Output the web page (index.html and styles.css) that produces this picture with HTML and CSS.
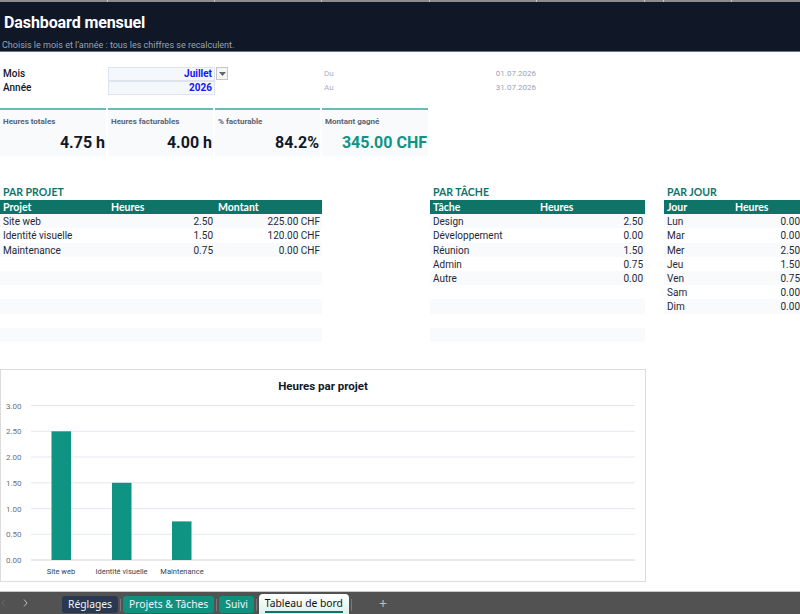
FILE: index.html
```html
<!DOCTYPE html>
<html lang="fr">
<head>
  <meta charset="UTF-8">
  <meta name="viewport" content="width=device-width, initial-scale=1.0">
  <title>Dashboard mensuel</title>
  <link rel="stylesheet" href="styles.css">
</head>
<body>
  <!-- column edges along the top of the sheet -->
  <div class="colbar">
    <span class="w-a"></span><span class="w-b"></span><span class="w-c"></span><span class="w-d"></span>
    <span class="w-e"></span><span class="w-f"></span><span class="w-g"></span><span class="w-h"></span><span></span>
  </div>

  <header class="banner">
    <h1>Dashboard mensuel</h1>
    <p>Choisis le mois et l’année : tous les chiffres se recalculent.</p>
  </header>

  <main class="sheet">
    <!-- Month / year selection -->
    <div class="params">
      <div class="lbl">Mois</div>
      <div class="input">Juillet<span class="dd"><svg width="7" height="4" viewBox="0 0 7 4"><path d="M0 0h7L3.5 4z" fill="#666"/></svg></span></div>
      <div></div>
      <div class="muted">Du</div>
      <div class="date">01.07.2026</div>
      <div class="lbl">Année</div>
      <div class="input">2026</div>
      <div></div>
      <div class="muted">Au</div>
      <div class="date">31.07.2026</div>
    </div>

    <!-- KPI cards -->
    <div class="kpis">
      <div class="card"><div class="card-label">Heures totales</div><div class="card-value">4.75 h</div></div>
      <div class="card"><div class="card-label">Heures facturables</div><div class="card-value">4.00 h</div></div>
      <div class="card"><div class="card-label">% facturable</div><div class="card-value">84.2%</div></div>
      <div class="card"><div class="card-label">Montant gagné</div><div class="card-value accent">345.00 CHF</div></div>
    </div>

    <!-- Breakdowns -->
    <div class="tables">
      <div class="tbl tbl-projet">
        <div class="tbl-title">PAR PROJET</div>
        <div class="row head"><span>Projet</span><span>Heures</span><span>Montant</span></div>
        <div class="row"><span>Site web</span><span class="num">2.50</span><span class="num">225.00 CHF</span></div>
        <div class="row"><span>Identité visuelle</span><span class="num">1.50</span><span class="num">120.00 CHF</span></div>
        <div class="row"><span>Maintenance</span><span class="num">0.75</span><span class="num">0.00 CHF</span></div>
        <div class="row"></div><div class="row"></div><div class="row"></div>
        <div class="row"></div><div class="row"></div><div class="row"></div>
      </div>
      <div></div>
      <div class="tbl tbl-tache">
        <div class="tbl-title">PAR TÂCHE</div>
        <div class="row head"><span>Tâche</span><span>Heures</span></div>
        <div class="row"><span>Design</span><span class="num">2.50</span></div>
        <div class="row"><span>Développement</span><span class="num">0.00</span></div>
        <div class="row"><span>Réunion</span><span class="num">1.50</span></div>
        <div class="row"><span>Admin</span><span class="num">0.75</span></div>
        <div class="row"><span>Autre</span><span class="num">0.00</span></div>
        <div class="row"></div><div class="row"></div><div class="row"></div><div class="row"></div>
      </div>
      <div></div>
      <div class="tbl tbl-jour">
        <div class="tbl-title">PAR JOUR</div>
        <div class="row head"><span>Jour</span><span>Heures</span></div>
        <div class="row"><span>Lun</span><span class="num">0.00</span></div>
        <div class="row"><span>Mar</span><span class="num">0.00</span></div>
        <div class="row"><span>Mer</span><span class="num">2.50</span></div>
        <div class="row"><span>Jeu</span><span class="num">1.50</span></div>
        <div class="row"><span>Ven</span><span class="num">0.75</span></div>
        <div class="row"><span>Sam</span><span class="num">0.00</span></div>
        <div class="row"><span>Dim</span><span class="num">0.00</span></div>
      </div>
    </div>

    <!-- Bar chart: hours per project -->
    <div class="chart">
      <svg width="644" height="211" viewBox="0 0 644 211">
        <text x="322" y="20" class="ch-title" text-anchor="middle">Heures par projet</text>
        <g class="grid">
          <line x1="30" x2="634" y1="35.5" y2="35.5"/>
          <line x1="30" x2="634" y1="61.3" y2="61.3"/>
          <line x1="30" x2="634" y1="87" y2="87"/>
          <line x1="30" x2="634" y1="112.8" y2="112.8"/>
          <line x1="30" x2="634" y1="138.6" y2="138.6"/>
          <line x1="30" x2="634" y1="164.3" y2="164.3"/>
        </g>
        <line x1="30" x2="634" y1="190" y2="190" class="axis"/>
        <g class="ylab">
          <text x="5" y="38.5">3.00</text>
          <text x="5" y="64.3">2.50</text>
          <text x="5" y="90">2.00</text>
          <text x="5" y="115.8">1.50</text>
          <text x="5" y="141.6">1.00</text>
          <text x="5" y="167.3">0.50</text>
          <text x="5" y="193">0.00</text>
        </g>
        <g class="bars">
          <rect x="50.5" y="61.3" width="19.5" height="128.7"/>
          <rect x="111" y="112.8" width="19.5" height="77.2"/>
          <rect x="171" y="151.4" width="19.5" height="38.6"/>
        </g>
        <g class="xlab" text-anchor="middle">
          <text x="60" y="204">Site web</text>
          <text x="120.5" y="204">Identité visuelle</text>
          <text x="181" y="204">Maintenance</text>
        </g>
      </svg>
    </div>
  </main>

  <!-- Sheet tabs -->
  <footer class="tabbar">
    <span class="nav nav-prev"><svg width="5" height="8" viewBox="0 0 5 8"><path d="M4 0.5L1 4l3 3.5" fill="none" stroke="currentColor" stroke-width="1"/></svg></span>
    <span class="nav nav-next"><svg width="5" height="8" viewBox="0 0 5 8"><path d="M1 0.5L4 4 1 7.5" fill="none" stroke="currentColor" stroke-width="1"/></svg></span>
    <div class="tabs">
      <span class="tab tab-navy">Réglages</span>
      <i class="sep"></i>
      <span class="tab tab-teal">Projets &amp; Tâches</span>
      <i class="sep"></i>
      <span class="tab tab-teal">Suivi</span>
      <i class="sep"></i>
      <span class="tab active"><u>Tableau de bord</u></span>
      <i class="sep"></i>
      <span class="add">+</span>
    </div>
  </footer>
</body>
</html>
```

FILE: styles.css
```css
:root {
  --a: 108px;
  --b: 107px;
  --c: 107px;
  --d: 108px;
  --e: 107px;
  --f: 108px;
  --g: 19px;
  --h: 68px;
  --teal-dark: #0f7468;
  --teal: #0f9484;
}
* {
  box-sizing: border-box;
}
body {
  margin: 0;
  width: 800px;
  height: 614px;
  overflow: hidden;
  font-family: Roboto, "Liberation Sans", sans-serif;
  color: #1f2937;
  background: #fff;
}

/* top column edges */
.colbar {
  display: flex;
  height: 2px;
  background: #8c8c8c;
}
.colbar span {
  border-right: 1px solid #c4c4c4;
  flex: none;
}
.colbar span:last-child {
  flex: 1;
  border: none;
}
.w-a { width: var(--a); }
.w-b { width: var(--b); }
.w-c { width: var(--c); }
.w-d { width: var(--d); }
.w-e { width: var(--e); }
.w-f { width: var(--f); }
.w-g { width: var(--g); }
.w-h { width: var(--h); }

.banner {
  height: 50px;
  background: #101828;
  border-bottom: 1px solid #6b7280;
  padding: 11px 0 0 4px;
}
.banner h1 {
  margin: 0;
  font-size: 16px;
  line-height: 20px;
  font-weight: 700;
  color: #fff;
  letter-spacing: -0.1px;
}
.banner p {
  margin: 7px 0 0 -2px;
  font-size: 9px;
  color: #98a2b3;
}

.sheet {
  height: 539px;
  padding-top: 15px;
}

/* month / year inputs */
.params {
  display: grid;
  grid-template-columns: var(--a) var(--b) var(--c) var(--d) var(--e);
  grid-auto-rows: 14px;
  font-size: 10px;
  line-height: 14px;
}
.lbl {
  padding-left: 3px;
  font-weight: 500;
  color: #111827;
}
.input {
  position: relative;
  background: #f4f7fb;
  border: 1px solid #dde4ee;
  text-align: right;
  padding-right: 2px;
  color: #1515f5;
  font-weight: 700;
  line-height: 12px;
}
.input + .input {
  border-top: none;
}
.dd {
  position: absolute;
  right: -14px;
  top: -1px;
  width: 12px;
  height: 13px;
  border: 1px solid #c6c6c6;
  background: #f6f6f6;
  display: flex;
  align-items: center;
  justify-content: center;
}
.muted {
  padding-left: 2px;
  font-size: 8px;
  color: #a8b0c0;
}
.date {
  text-align: right;
  font-size: 8px;
  color: #9aa3b5;
  padding-right: 1px;
}

/* KPI cards */
.kpis {
  display: grid;
  grid-template-columns: var(--a) var(--b) var(--c) var(--d);
  margin-top: 13px;
  height: 48px;
}
.card {
  margin-right: 2px;
  background: #f8fafc;
  border-top: 2px solid #65bfae;
  padding: 7px 1px 0 3px;
}
.card-label {
  font-size: 8px;
  font-weight: 700;
  color: #5b6474;
}
.card-value {
  margin-top: 7px;
  text-align: right;
  font-size: 16px;
  font-weight: 700;
  color: #111827;
}
.card-value.accent {
  color: var(--teal);
}

/* breakdown tables */
.tables {
  display: grid;
  grid-template-columns: calc(var(--a) + var(--b) + var(--c)) var(--d) calc(var(--e) + var(--f)) var(--g) 1fr;
  margin-top: 30px;
  height: 183px;
}
.tbl-title {
  height: 14px;
  padding-left: 3px;
  font-family: Lato, "Open Sans", sans-serif;
  font-weight: 700;
  font-size: 10.5px;
  line-height: 12px;
  color: var(--teal-dark);
}
.row {
  display: grid;
  height: 14.2px;
  font-size: 10px;
  line-height: 15px;
  color: #1f2937;
}
.row:nth-child(odd) {
  background: #f8fafc;
}
.row span {
  padding: 0 2px 0 3px;
  white-space: nowrap;
}
.row .num {
  text-align: right;
}
.row.head {
  background: var(--teal-dark);
  color: #fff;
  font-family: Lato, "Open Sans", sans-serif;
  font-weight: 700;
  font-size: 10.5px;
  line-height: 14px;
}
.row.head span {
  text-align: left;
}
.tbl-projet .row {
  grid-template-columns: var(--a) var(--b) var(--c);
}
.tbl-tache .row {
  grid-template-columns: var(--e) var(--f);
}
.tbl-jour .row {
  grid-template-columns: var(--h) 1fr;
}
.tbl-jour .row .num {
  padding-right: 0;
}

/* chart */
.chart {
  width: 646px;
  height: 213px;
  border: 1px solid #dcdcdc;
  background: #fff;
}
.chart svg {
  display: block;
}
.ch-title {
  font-family: Roboto, sans-serif;
  font-weight: 700;
  font-size: 11.5px;
  fill: #111827;
}
.grid line {
  stroke: #e3e8f0;
  stroke-width: 1;
}
.axis {
  stroke: #d4d4d4;
  stroke-width: 1;
}
.ylab text {
  font-size: 8px;
  fill: #6b7280;
}
.xlab text {
  font-size: 7.5px;
  fill: #374151;
}
.bars rect {
  fill: var(--teal);
}

/* sheet tab bar */
.tabbar {
  height: 23px;
  background: #525252;
  border-top: 1px solid #c9c9c9;
  display: flex;
  align-items: flex-end;
  font-family: "Noto Sans", "Open Sans", sans-serif;
  font-size: 10.3px;
}
.nav {
  display: flex;
  align-items: center;
  height: 22px;
}
.nav-prev {
  color: #6a6a6a;
  margin-left: 1px;
}
.nav-next {
  color: #bdbdbd;
  margin-left: 17px;
}
.tabs {
  display: flex;
  align-items: flex-end;
  margin-left: 34px;
  height: 22px;
}
.tab {
  height: 17px;
  line-height: 17px;
  padding: 0 6px;
  margin-bottom: 1px;
  border-radius: 3px;
  color: #f1f5f9;
  white-space: nowrap;
}
.tab-navy {
  background: #2a3850;
}
.tab-teal {
  background: #10917f;
}
.active {
  height: 20px;
  margin-bottom: 0;
  border-radius: 4px 4px 0 0;
  background: linear-gradient(#ffffff, #dcf2ec);
  color: #111;
  line-height: 19px;
}
.active u {
  text-decoration: none;
  border-bottom: 2px solid var(--teal-dark);
  padding-bottom: 1px;
}
.sep {
  width: 1px;
  height: 12px;
  background: #7a7a7a;
  margin: 0 2px 3px;
}
.add {
  color: #bdbdbd;
  font-size: 14px;
  line-height: 20px;
  margin-left: 25px;
}
```
